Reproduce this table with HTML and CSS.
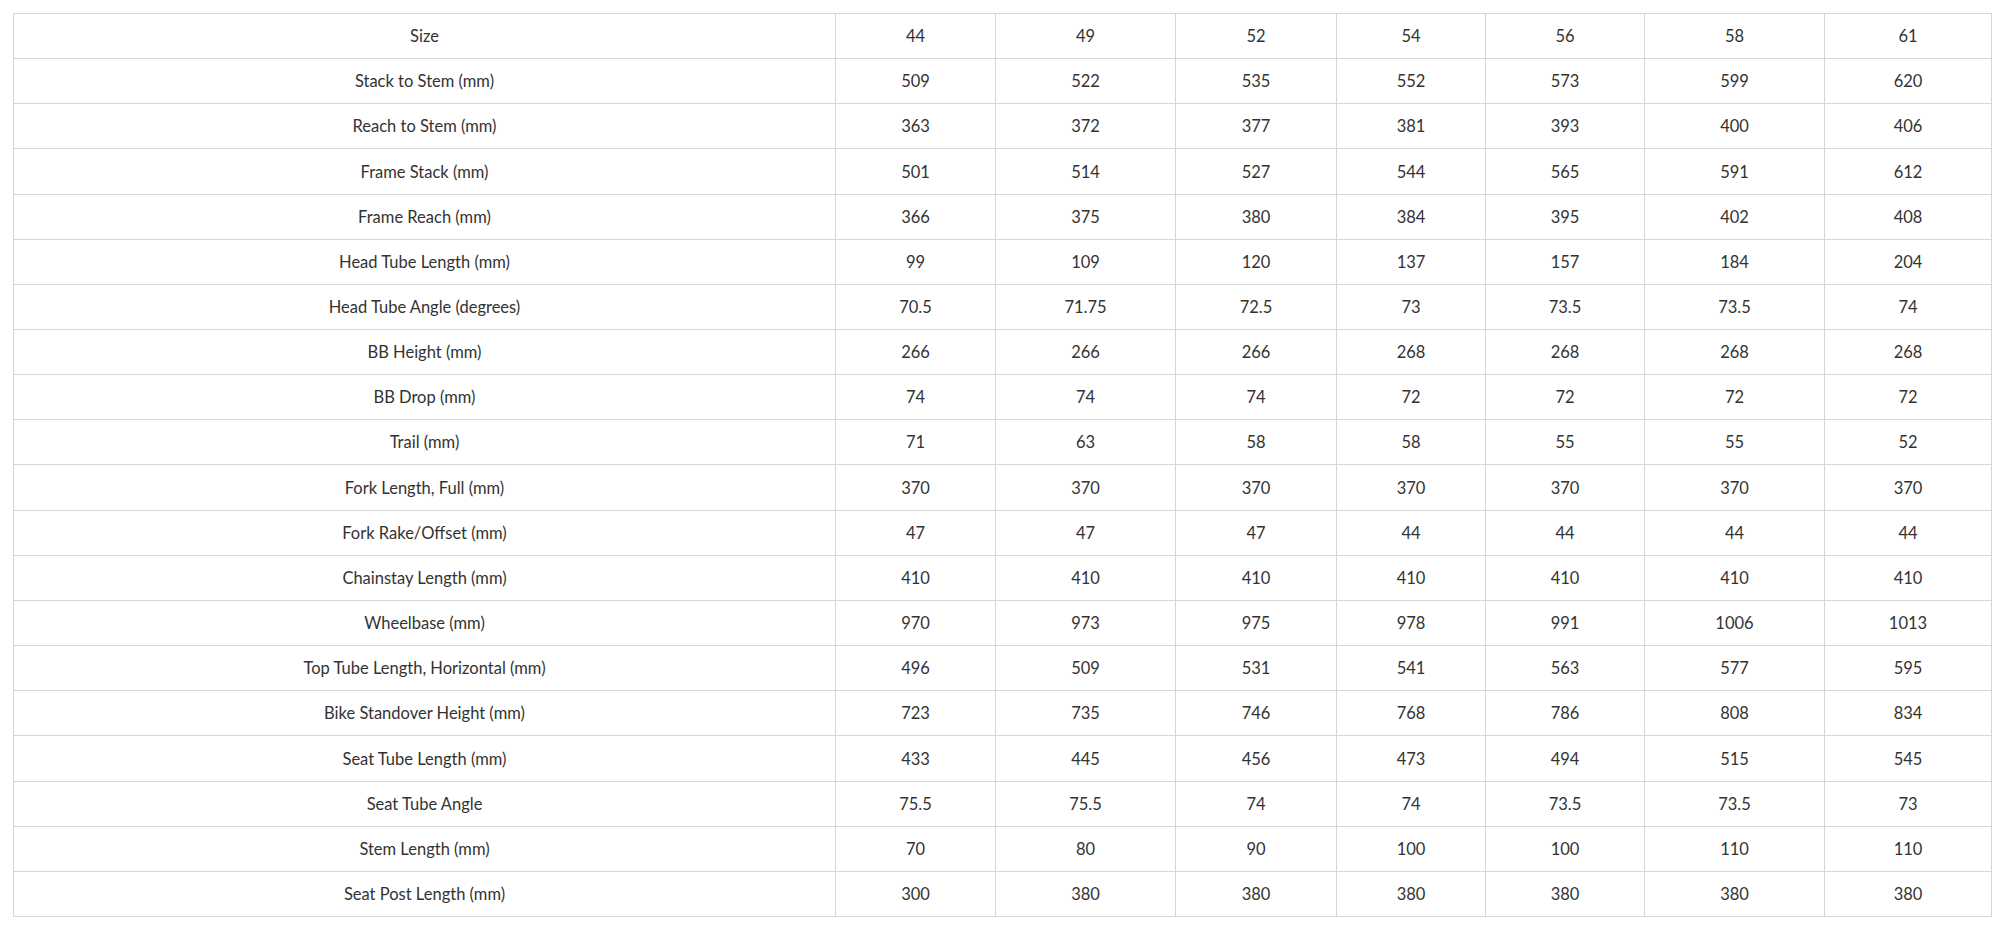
FILE: index.html
```html
<!DOCTYPE html>
<html lang="en">
<head>
<meta charset="utf-8">
<title>Geometry</title>
<link rel="stylesheet" href="styles.css">
</head>
<body>
<div class="page">
<table class="geo">
<colgroup>
<col class="c-label"><col class="c1"><col class="c2"><col class="c3"><col class="c4"><col class="c5"><col class="c6"><col class="c7">
</colgroup>
<tbody>
<tr><td>Size</td><td>44</td><td>49</td><td>52</td><td>54</td><td>56</td><td>58</td><td>61</td></tr>
<tr><td>Stack to Stem (mm)</td><td>509</td><td>522</td><td>535</td><td>552</td><td>573</td><td>599</td><td>620</td></tr>
<tr><td>Reach to Stem (mm)</td><td>363</td><td>372</td><td>377</td><td>381</td><td>393</td><td>400</td><td>406</td></tr>
<tr><td>Frame Stack (mm)</td><td>501</td><td>514</td><td>527</td><td>544</td><td>565</td><td>591</td><td>612</td></tr>
<tr><td>Frame Reach (mm)</td><td>366</td><td>375</td><td>380</td><td>384</td><td>395</td><td>402</td><td>408</td></tr>
<tr><td>Head Tube Length (mm)</td><td>99</td><td>109</td><td>120</td><td>137</td><td>157</td><td>184</td><td>204</td></tr>
<tr><td>Head Tube Angle (degrees)</td><td>70.5</td><td>71.75</td><td>72.5</td><td>73</td><td>73.5</td><td>73.5</td><td>74</td></tr>
<tr><td>BB Height (mm)</td><td>266</td><td>266</td><td>266</td><td>268</td><td>268</td><td>268</td><td>268</td></tr>
<tr><td>BB Drop (mm)</td><td>74</td><td>74</td><td>74</td><td>72</td><td>72</td><td>72</td><td>72</td></tr>
<tr><td>Trail (mm)</td><td>71</td><td>63</td><td>58</td><td>58</td><td>55</td><td>55</td><td>52</td></tr>
<tr><td>Fork Length, Full (mm)</td><td>370</td><td>370</td><td>370</td><td>370</td><td>370</td><td>370</td><td>370</td></tr>
<tr><td>Fork Rake/Offset (mm)</td><td>47</td><td>47</td><td>47</td><td>44</td><td>44</td><td>44</td><td>44</td></tr>
<tr><td>Chainstay Length (mm)</td><td>410</td><td>410</td><td>410</td><td>410</td><td>410</td><td>410</td><td>410</td></tr>
<tr><td>Wheelbase (mm)</td><td>970</td><td>973</td><td>975</td><td>978</td><td>991</td><td>1006</td><td>1013</td></tr>
<tr><td>Top Tube Length, Horizontal (mm)</td><td>496</td><td>509</td><td>531</td><td>541</td><td>563</td><td>577</td><td>595</td></tr>
<tr><td>Bike Standover Height (mm)</td><td>723</td><td>735</td><td>746</td><td>768</td><td>786</td><td>808</td><td>834</td></tr>
<tr><td>Seat Tube Length (mm)</td><td>433</td><td>445</td><td>456</td><td>473</td><td>494</td><td>515</td><td>545</td></tr>
<tr><td>Seat Tube Angle</td><td>75.5</td><td>75.5</td><td>74</td><td>74</td><td>73.5</td><td>73.5</td><td>73</td></tr>
<tr><td>Stem Length (mm)</td><td>70</td><td>80</td><td>90</td><td>100</td><td>100</td><td>110</td><td>110</td></tr>
<tr><td>Seat Post Length (mm)</td><td>300</td><td>380</td><td>380</td><td>380</td><td>380</td><td>380</td><td>380</td></tr>
</tbody>
</table>
</div>
</body>
</html>
```
FILE: styles.css
```css
html, body {
  margin: 0;
  padding: 0;
  background: #ffffff;
}

.page {
  padding: 13px;
}

.geo {
  border-collapse: collapse;
  table-layout: fixed;
  width: 1978px;
  font-family: Lato, "Liberation Sans", sans-serif;
  font-weight: 400;
  font-size: 16.5px;
  color: #333333;
}

.c-label { width: 822px; }
.c1 { width: 160px; }
.c2 { width: 180px; }
.c3 { width: 161px; }
.c4 { width: 149px; }
.c5 { width: 159px; }
.c6 { width: 180px; }
.c7 { width: 167px; }

.geo tr {
  height: 45px;
}

.geo tr:nth-child(4),
.geo tr:nth-child(11),
.geo tr:nth-child(17) {
  height: 46px;
}

.geo td {
  border: 1px solid #d6d6d6;
  text-align: center;
  vertical-align: middle;
  padding: 0 4px;
  line-height: 20px;
}
```
